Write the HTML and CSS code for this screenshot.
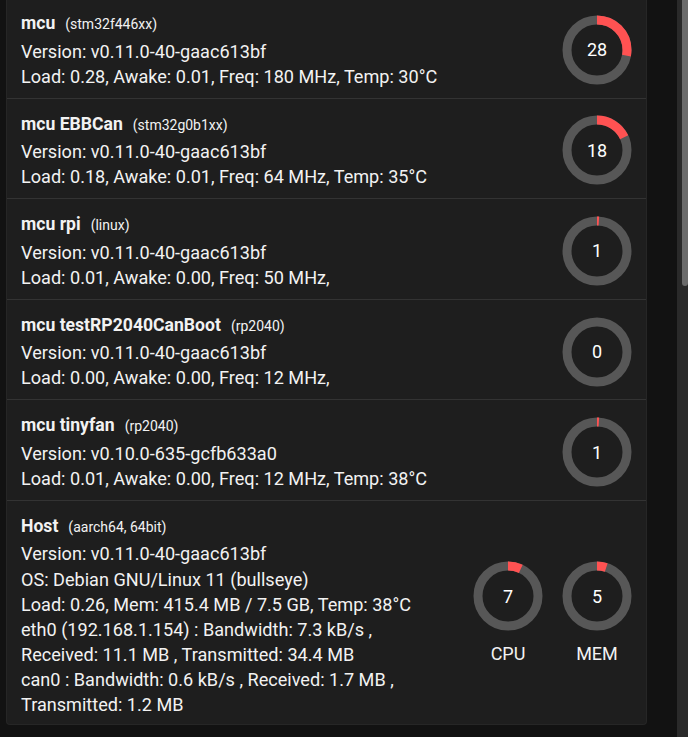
FILE: index.html
```html
<!DOCTYPE html>
<html>
<head>
<meta charset="utf-8">
<link rel="stylesheet" href="styles.css">
</head>
<body>
<div class="page">
  <div class="card">
    <div class="row">
      <div class="info">
        <div class="title"><span class="name">mcu</span><span class="chip">(stm32f446xx)</span></div>
        <div class="line">Version: v0.11.0-40-gaac613bf</div>
        <div class="line">Load: 0.28, Awake: 0.01, Freq: 180 MHz, Temp: 30°C</div>
      </div>
      <div class="gauge">
        <svg width="70" height="70" viewBox="0 0 70 70"><circle class="track" cx="35" cy="35" r="30"/><circle class="bar" cx="35" cy="35" r="30" stroke-dasharray="52.8 188.5" transform="rotate(-90 35 35)"/></svg>
        <span class="val">28</span>
      </div>
    </div>
    <div class="row">
      <div class="info">
        <div class="title"><span class="name">mcu EBBCan</span><span class="chip">(stm32g0b1xx)</span></div>
        <div class="line">Version: v0.11.0-40-gaac613bf</div>
        <div class="line">Load: 0.18, Awake: 0.01, Freq: 64 MHz, Temp: 35°C</div>
      </div>
      <div class="gauge">
        <svg width="70" height="70" viewBox="0 0 70 70"><circle class="track" cx="35" cy="35" r="30"/><circle class="bar" cx="35" cy="35" r="30" stroke-dasharray="33.9 188.5" transform="rotate(-90 35 35)"/></svg>
        <span class="val">18</span>
      </div>
    </div>
    <div class="row">
      <div class="info">
        <div class="title"><span class="name">mcu rpi</span><span class="chip">(linux)</span></div>
        <div class="line">Version: v0.11.0-40-gaac613bf</div>
        <div class="line">Load: 0.01, Awake: 0.00, Freq: 50 MHz,</div>
      </div>
      <div class="gauge">
        <svg width="70" height="70" viewBox="0 0 70 70"><circle class="track" cx="35" cy="35" r="30"/><circle class="bar" cx="35" cy="35" r="30" stroke-dasharray="1.9 188.5" transform="rotate(-90 35 35)"/></svg>
        <span class="val">1</span>
      </div>
    </div>
    <div class="row">
      <div class="info">
        <div class="title"><span class="name">mcu testRP2040CanBoot</span><span class="chip">(rp2040)</span></div>
        <div class="line">Version: v0.11.0-40-gaac613bf</div>
        <div class="line">Load: 0.00, Awake: 0.00, Freq: 12 MHz,</div>
      </div>
      <div class="gauge">
        <svg width="70" height="70" viewBox="0 0 70 70"><circle class="track" cx="35" cy="35" r="30"/></svg>
        <span class="val">0</span>
      </div>
    </div>
    <div class="row">
      <div class="info">
        <div class="title"><span class="name">mcu tinyfan</span><span class="chip">(rp2040)</span></div>
        <div class="line">Version: v0.10.0-635-gcfb633a0</div>
        <div class="line">Load: 0.01, Awake: 0.00, Freq: 12 MHz, Temp: 38°C</div>
      </div>
      <div class="gauge">
        <svg width="70" height="70" viewBox="0 0 70 70"><circle class="track" cx="35" cy="35" r="30"/><circle class="bar" cx="35" cy="35" r="30" stroke-dasharray="1.9 188.5" transform="rotate(-90 35 35)"/></svg>
        <span class="val">1</span>
      </div>
    </div>
    <div class="row host">
      <div class="info">
        <div class="title"><span class="name">Host</span><span class="chip">(aarch64, 64bit)</span></div>
        <div class="line">Version: v0.11.0-40-gaac613bf</div>
        <div class="line">OS: Debian GNU/Linux 11 (bullseye)</div>
        <div class="line">Load: 0.26, Mem: 415.4 MB / 7.5 GB, Temp: 38°C</div>
        <div class="line">eth0 (192.168.1.154) : Bandwidth: 7.3 kB/s ,</div>
        <div class="line">Received: 11.1 MB , Transmitted: 34.4 MB</div>
        <div class="line">can0 : Bandwidth: 0.6 kB/s , Received: 1.7 MB ,</div>
        <div class="line">Transmitted: 1.2 MB</div>
      </div>
      <div class="gauges">
        <div class="gcol">
          <div class="gauge">
            <svg width="70" height="70" viewBox="0 0 70 70"><circle class="track" cx="35" cy="35" r="30"/><circle class="bar" cx="35" cy="35" r="30" stroke-dasharray="13.2 188.5" transform="rotate(-90 35 35)"/></svg>
            <span class="val">7</span>
          </div>
          <div class="glabel">CPU</div>
        </div>
        <div class="gcol">
          <div class="gauge">
            <svg width="70" height="70" viewBox="0 0 70 70"><circle class="track" cx="35" cy="35" r="30"/><circle class="bar" cx="35" cy="35" r="30" stroke-dasharray="9.4 188.5" transform="rotate(-90 35 35)"/></svg>
            <span class="val">5</span>
          </div>
          <div class="glabel">MEM</div>
        </div>
      </div>
    </div>
  </div>
</div>
<div class="scrollbar"><div class="thumb"></div></div>
</body>
</html>
```
FILE: styles.css
```css
html, body {
  margin: 0;
  padding: 0;
  background: #121212;
  height: 100%;
  overflow: hidden;
}
body {
  font-family: Roboto, "Liberation Sans", sans-serif;
  color: #f2f2f2;
}
.page {
  padding-left: 6px;
  margin-top: -2px;
}
.card {
  width: 639px;
  background: #1e1e1e;
  border: 1px solid #262626;
  border-top: none;
  border-radius: 0 0 4px 4px;
}
.row {
  display: flex;
  align-items: center;
  padding: 13px 14px 9px 14px;
  border-bottom: 1px solid #333333;
  height: 77.6px;
}
.row.host {
  border-bottom: none;
  height: auto;
  padding-bottom: 7px;
}
.info {
  flex: 1;
  align-self: flex-start;
}
.title {
  line-height: 24px;
  height: 24px;
  white-space: nowrap;
}
.name {
  font-weight: 700;
  font-size: 17.6px;
}
.chip {
  font-size: 14px;
  margin-left: 10px;
}
.title + .line {
  margin-top: 3.5px;
}
.line {
  font-size: 18.1px;
  line-height: 25.1px;
  white-space: nowrap;
}
.gauge {
  position: relative;
  width: 70px;
  height: 70px;
}
.gauge svg {
  display: block;
}
.track {
  fill: none;
  stroke: #575757;
  stroke-width: 9;
}
.bar {
  fill: none;
  stroke: #ff5252;
  stroke-width: 9;
}
.val {
  position: absolute;
  inset: 0;
  display: flex;
  align-items: center;
  justify-content: center;
  font-size: 18px;
  color: #ffffff;
}
.gauges {
  display: flex;
  gap: 19px;
  margin-bottom: 4px;
}
.gcol {
  display: flex;
  flex-direction: column;
  align-items: center;
}
.glabel {
  margin-top: 11px;
  line-height: 24px;
  font-size: 18px;
}
.scrollbar {
  position: fixed;
  top: 0;
  right: 0;
  width: 11px;
  height: 100%;
  background: #2a2a2a;
}
.thumb {
  margin-left: 5px;
  width: 6px;
  height: 286px;
  background: #6b6b6b;
  border-radius: 0 0 3px 3px;
}
```
